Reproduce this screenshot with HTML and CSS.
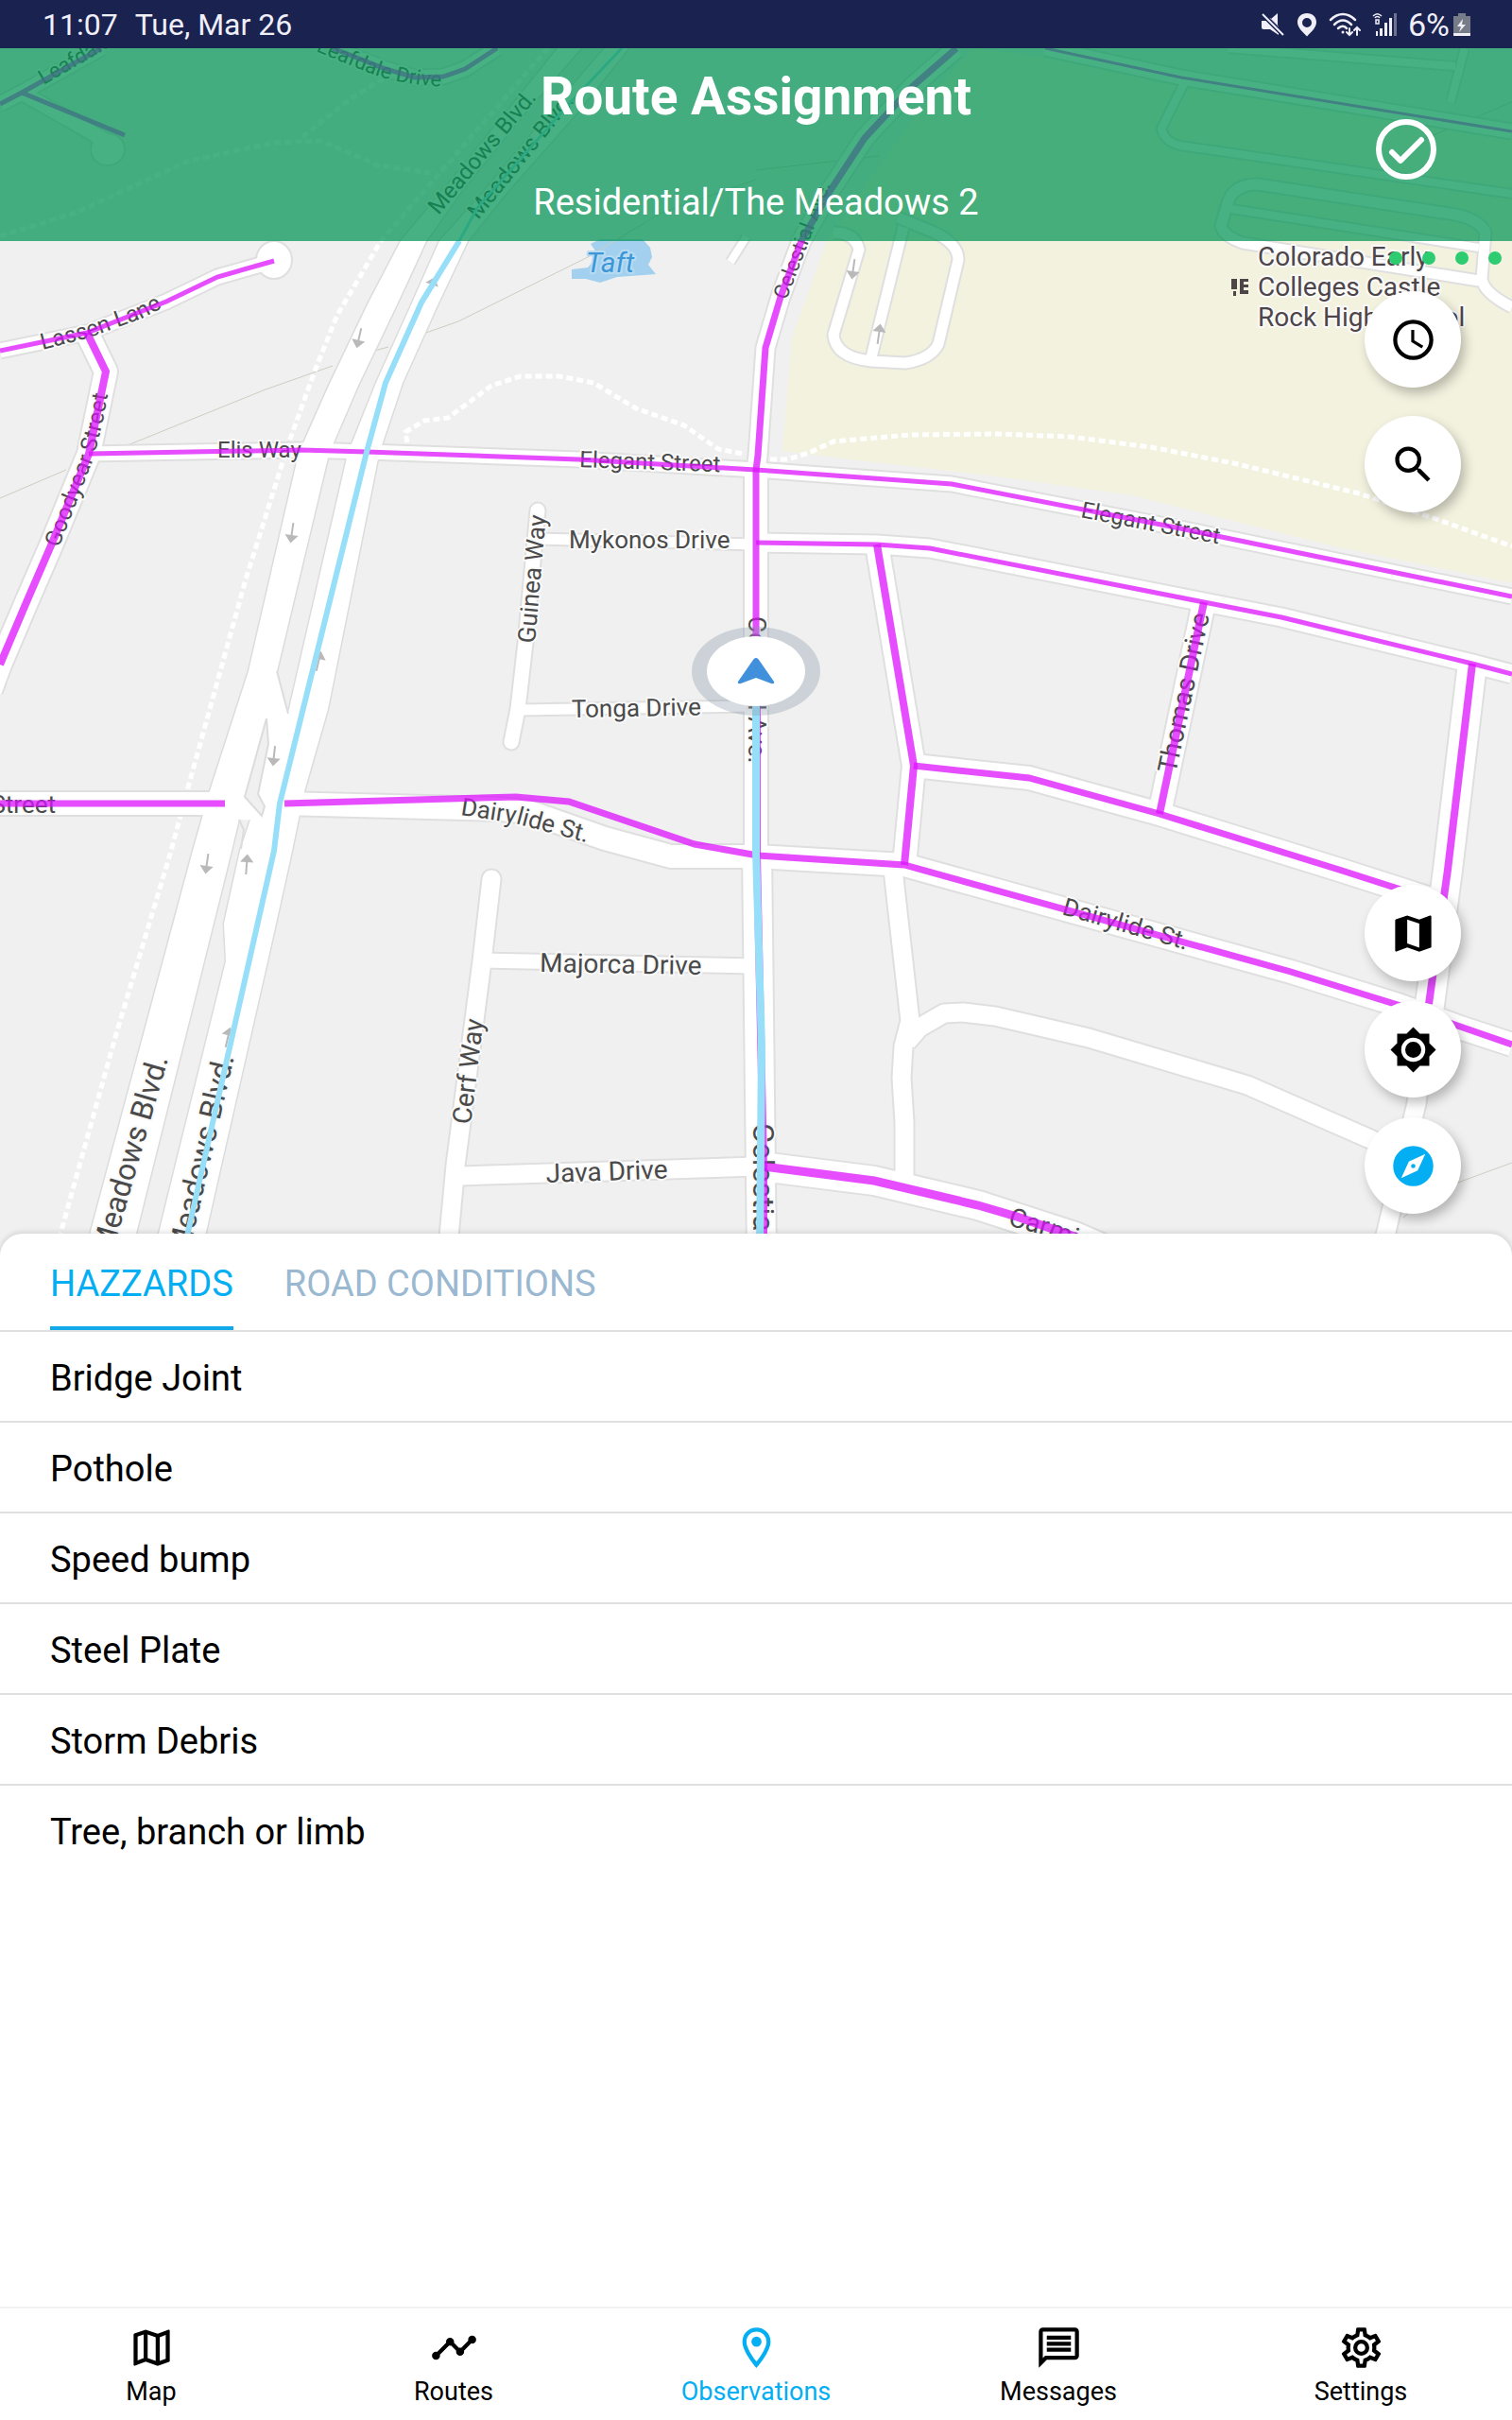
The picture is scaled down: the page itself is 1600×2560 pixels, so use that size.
FILE: index.html
```html
<!DOCTYPE html>
<html lang="en">
<head>
  <meta charset="UTF-8" />
  <meta name="viewport" content="width=device-width, initial-scale=1.0" />
  <title>Route Assignment</title>
  <link rel="stylesheet" href="styles.css">
</head>
<body>
  <div class="status-bar">
    <div class="status-left">
      <span>11:07</span>
      <span>Tue, Mar 26</span>
    </div>
    <div class="status-right">
      <svg width="26" height="26" viewBox="0 0 26 26" fill="#f0eff8">
        <path d="M1 9h5l4-3 9 9v9l-9-6H3a2 2 0 0 1-2-2z" />
        <path d="M11 7l7-6v13z" />
        <path d="M2 2l22 22" stroke="#1a2250" stroke-width="5" />
        <path d="M2 2l22 22" stroke="#f0eff8" stroke-width="2" />
      </svg>
      <svg width="22" height="26" viewBox="0 0 22 26" fill="#f0eff8">
        <path fill-rule="evenodd" d="M11 1C5 1 1 5 1 10.500c0 5 4 9 10 15 6-6 10-10 10-15C21 5 17 1 11 1zm0 5a5 5 0 1 1 0 10 5 5 0 0 1 0-10z" />
      </svg>
      <svg width="34" height="26" viewBox="0 0 34 26" fill="none" stroke="#f0eff8" stroke-width="2.500" stroke-linecap="round">
        <path d="M2 8c8-8 18-8 26 0M6 13c6-6 12-6 18 0M10 17c3-3 7-3 9 0" />
        <path d="M22 17v7m-3-3l3 3 3-3M30 24v-8m-3 3l3-3 3 3" stroke-width="2" />
        <circle cx="15" cy="21" r="1.500" fill="#f0eff8" stroke="none" />
      </svg>
      <svg width="26" height="26" viewBox="0 0 26 26" fill="#f0eff8">
        <path d="M4 20h2v5H4zM8 17h3v8H8zM13 11h3v14h-3zM18 6h3v19h-3z" />
        <path d="M23 1h3v24h-3z" fill="#6d738f" />
        <path d="M1 4c3-3 6-3 9 0M3 6c1-2 4-2 5 0M4 8h3v4H4z" fill="none" stroke="#f0eff8" stroke-width="1.500" />
      </svg>
      <span class="battery">6%
        <svg width="18" height="26" viewBox="0 0 18 26">
          <path d="M5 1h8v3h5v21H0V4h5z" fill="#767c88" />
          <path d="M0 22h18v2a1 1 0 0 1-1 1H1a1 1 0 0 1-1-1z" fill="#f0eff8" />
          <path d="M10 7l-6 8h4l-2 6 7-8H9z" fill="#f0eff8" />
        </svg>
      </span>
    </div>
  </div>

  <section class="map">
    <svg class="map-canvas" viewBox="0 51 1600 1274">
      <defs>
        <path id="arrow" d="M0-10V8M-5 4l5 6 5-6z" fill="#b9b9b9" stroke="#b9b9b9" stroke-width="2" />
        <path id="lassen" d="M45 370L95 357L150 337L190 316" />
        <path id="goodyear" d="M62 580L84 524L100 482L109 445L118 395" />
        <path id="dairylide" d="M487 862L545 871L650 899" />
        <path id="carmi" d="M1066 1296L1110 1308L1200 1345" />
        <path id="leafdale" d="M334 54L385 75Q420 90 475 92" />
        <!-- every plain road, stroked twice: casing, then fill -->
        <g id="roads" fill="none" stroke-linejoin="round">
          <g class="w8"><path d="M773 277L790 250M1254 86L1229 136Q1232 150 1249 154L1600 205M1303 221L1565 262M1535 108L1550 51M1300 51L1540 70" /></g>
          <g class="w12"><path d="M882 246Q905 246 909 264L882 354Q884 378 922 382L958 384Q985 380 993 364L1014 275Q1014 258 989 246L950 230M956 240L922 378" />
            <path d="M1600 325Q1570 310 1568 295L1572 246Q1565 232 1540 227L1331 195Q1305 195 1299 215L1292 239Q1295 250 1315 257L1565 297" /></g>
          <g class="w12"><path d="M569 570L800 576M550 751L800 747" /></g>
          <g class="w16"><path stroke-linecap="round" d="M569 540L556 680L548 750L541 785" /></g>
          <g class="w16"><path d="M510 1016L800 1022M0 371L92 352L153 328L176 319L230 293L290 276M94 480L319 476L388 478L612 486L800 497L1007 512L1239 557L1600 631M107 51L23 98L0 110M23 98L114 150M526 51L492 73L469 81L439 82L408 73L352 51M1106 51L1250 82L1600 139" /></g>
          <g class="w20"><path stroke-linecap="round" d="M520 930L510 1017L482 1233L472 1340" /><path d="M487 1244L800 1234" />
            <path d="M800 574L928 576L984 580L1274 637L1356 653L1558 702L1600 713M945 920L963 1080L956 1107L954 1140L957 1187L957 1245M960 1102L973 1087L999 1072L1019 1071L1053 1075L1152 1098L1320 1148L1450 1205L1485 1222M1512 1062L1499 1167L1467 1303L1460 1330" />
            <path d="M1012 51L966 91L915 146L877 204L848 255L826 314L810 368L802 482L800 497" /></g>
          <g class="w24"><path d="M0 850L300 850L530 856L560 859L640 887L710 906L800 906L957 915L1366 1028L1479 1063L1545 1087L1600 1105M92 352L112 393L94 480L54 577L28 637L0 703L-10 730M800 490L800 910M928 576L967 810L957 915M967 810L1089 823L1227 861L1417 920L1520 953M1274 637L1227 861" /></g>
          <g class="w30"><path d="M1558 702L1532 920L1512 1070M801 900L806 1330M806 1234L925 1249L1035 1275L1137 1308L1200 1335" /></g>
          <g class="w8"><ellipse cx="290" cy="275" rx="14" ry="15" fill="#fff" /><ellipse cx="114" cy="158" rx="13" ry="12" fill="#fff" /></g>
        </g>
      </defs>

      <rect x="0" y="51" width="1600" height="1274" fill="#f0f0f0" />
      <path fill="#f3f2df" d="M1030 51L1106 60L1250 90L1600 147V617L1412 578L1198 524L1055 504L866 482L828 477L838 357L875 255L920 190L985 100z" />
      <path fill="#a3d0ee" d="M625 258L635 253H680L688 262L690 272L686 280L694 290L653 293L635 299L620 295H605V285L622 283L633 270z" />
      <path class="trail" d="M0 527L70 497M135 471L281 412L352 387M389 373L411 367M448 353L485 340L622 272L700 225L800 190M1540 1252L1600 1230M1485 1288L1500 1275M800 180L930 165M1500 150L1600 108" />
      <g class="footpath">
        <path d="M580 51L403 255L357 333L334 390L306 467L260 613L199 833L181 900L122 1097L64 1305" />
        <path d="M431 468L429 457L449 445L474 442L520 408L551 398H592L628 405L673 432L724 450L760 475L786 480" />
        <path d="M815 486H833L856 479L882 467L963 460L1055 459L1132 462L1218 473L1310 491L1438 522L1514 547L1600 578" />
        <path d="M0 250L80 225L200 170L290 151L340 149L400 175L455 183M320 145L370 105L420 75" />
      </g>

      <!-- Meadows Blvd. widens towards the viewer -->
      <g fill="#fff" stroke="#dcdcdc" stroke-width="3">
        <path d="M595 45L535 120L470 200L424 255L390 320L347 410L316 480L263 710L222 837L204 900L90 1325H139L245 900L260 837L293 710L348 480L378 410L421 320L451 255L490 200L555 120L620 45z" />
        <path d="M645 45L585 115L510 205L465 255L434 325L398 405L368 480L306 750L275 837L254 900L237 977L239 1017L163 1325H213L283 1017L292 977L309 900L322 837L347 750L401 480L426 405L462 325L495 255L535 205L610 120L670 45z" />
      </g>
      <use href="#roads" class="casing" />
      <use href="#roads" class="fill" />
      <path fill="#fff" d="M595 45L535 120L470 200L424 255L390 320L347 410L316 480L263 710L222 837L204 900L90 1325H139L245 900L260 837L293 710L348 480L378 410L421 320L451 255L490 200L555 120L620 45z" />
      <path fill="#fff" d="M645 45L585 115L510 205L465 255L434 325L398 405L368 480L306 750L275 837L254 900L237 977L239 1017L163 1325H213L283 1017L292 977L309 900L322 837L347 750L401 480L426 405L462 325L495 255L535 205L610 120L670 45z" />
      <path fill="#fff" d="M292 706L305 757L278 868L253 867L240 850z" />
      <path fill="none" stroke="#dcdcdc" stroke-width="2" d="M293 710L305 755M253 867L258 878L255 898" />
      <path fill="#f0f0f0" stroke="#dcdcdc" stroke-width="2" d="M282 760L284 787L273 840L280 853L277 863L259 843z" />

      <g>
        <use href="#arrow" transform="translate(380 357) rotate(13)" />
        <use href="#arrow" transform="translate(309 563) rotate(8)" />
        <use href="#arrow" transform="translate(290 799) rotate(6)" />
        <use href="#arrow" transform="translate(219 913) rotate(8)" />
        <use href="#arrow" transform="translate(261 915) rotate(184)" />
        <use href="#arrow" transform="translate(903 284) rotate(8)" />
        <use href="#arrow" transform="translate(930 354) rotate(188)" />
        <use href="#arrow" transform="translate(456 304) rotate(200)" />
        <use href="#arrow" transform="translate(337 700) rotate(193)" />
        <use href="#arrow" transform="translate(241 1098) rotate(193)" />
      </g>

      <g class="labels">
        <text><textPath href="#lassen">Lassen Lane</textPath></text>
        <text><textPath href="#goodyear">Goodyear Street</textPath></text>
        <text class="mid"><textPath href="#dairylide">Dairylide St.</textPath></text>
        <text class="near"><textPath href="#carmi">Carmi</textPath></text>
        <text class="far"><textPath href="#leafdale">Leafdale Drive</textPath></text>
        <text class="far" transform="translate(46 90) rotate(-30)">Leafdale</text>
        <text x="230" y="484">Elis Way</text>
        <text transform="translate(613 494) rotate(2)">Elegant Street</text>
        <text transform="translate(1143 547) rotate(11)">Elegant Street</text>
        <text class="mid" transform="translate(602 580)">Mykonos Drive</text>
        <text class="mid" transform="translate(605 759) rotate(-1)">Tonga Drive</text>
        <text class="mid" transform="translate(566 681) rotate(-85)">Guinea Way</text>
        <text class="near" transform="translate(1244 819) rotate(-78)">Thomas Drive</text>
        <text class="mid" text-anchor="end" x="59" y="860">Street</text>
        <text class="mid" transform="translate(1123 967) rotate(16)">Dairylide St.</text>
        <text class="near" transform="translate(571 1028) rotate(1)">Majorca Drive</text>
        <text class="near" transform="translate(578 1251) rotate(-2)">Java Drive</text>
        <text class="near" transform="translate(498 1190) rotate(-83)">Cerf Way</text>
        <text class="wide" text-anchor="end" transform="translate(178 1120) rotate(-74)">Meadows Blvd.</text>
        <text class="wide" text-anchor="end" transform="translate(248 1118) rotate(-77)">Meadows Blvd.</text>
        <text transform="translate(464 228) rotate(-50)">Meadows Blvd.</text>
        <text transform="translate(506 233) rotate(-51)">Meadows Blvd.</text>
        <text class="far" transform="translate(832 318) rotate(-69)">Celestial Ave.</text>
        <text class="mid" transform="translate(792 652) rotate(90)">Celestial Ave.</text>
        <text class="wide" transform="translate(797 1188) rotate(90)">Celestial Ave.</text>
        <text class="lake" x="620" y="288">Taft</text>
        <g class="school">
          <text x="1331" y="281">Colorado Early</text>
          <text x="1331" y="313">Colleges Castle</text>
          <text x="1331" y="345">Rock High School</text>
        </g>
        <path fill="#4d4548" d="M1303 295h6v11h-6zM1305 308h3v5h-3zM1312 295h9v3h-5v3h5v3h-5v3h5v4h-9z" />
      </g>

      <g class="route">
        <path stroke-width="5" d="M0 371L92 352L153 328L176 319L230 293L290 276M94 480L319 476L388 478L612 486L800 497L1007 512L1239 557L1600 631M800 574L928 576L984 580L1274 637L1356 653L1558 702L1600 713M352 51L408 73L439 82L469 81L492 73L526 51M107 51L23 98L0 110M23 98L132 143" />
        <path stroke-width="3" d="M1106 51L1250 82L1600 139" />
        <path stroke-width="7" d="M1012 51L966 91L915 146L877 204L848 255L826 314L810 368L802 482L800 497V710" />
        <path stroke-width="7" d="M0 850H238M301 850L546 843L602 848L735 893L802 905L957 915L1366 1028L1479 1063L1600 1105M967 810L1089 823L1227 861L1417 920L1520 953" />
        <path stroke-width="8" d="M92 352L112 393L94 480L54 577L28 637L0 703M928 576L967 810L957 915M1274 637L1227 861M1558 702L1532 920L1512 1062M801 710L801 905L808 1234V1325" />
        <path stroke-width="9" d="M808 1234L925 1249L1035 1275L1076 1287L1137 1308L1200 1335" />
      </g>
      <g fill="none" stroke="#97dff9">
        <path stroke-width="3" d="M658 51L602 110L505 220L486 255" />
        <path stroke-width="6" d="M486 255L446 320L408 405L388 478L296 850L290 900L194 1325" />
        <path stroke-width="8" d="M800 710V900L806 1108L804 1325" />
      </g>

      <ellipse cx="800" cy="710" rx="68" ry="47" fill="#8a9aa8" fill-opacity=".35" />
      <ellipse cx="800" cy="710" rx="52" ry="37" fill="#fff" />
      <path fill="#4190dc" d="M800 696q2 0 3 2l16 23q1 3-3 2l-16-6-16 6q-4 1-3-2l16-23q1-2 3-2z" />
    </svg>

    <header class="header">
      <h1>Route Assignment</h1>
      <p>Residential/The Meadows 2</p>
      <button class="done" aria-label="Complete route">
        <svg viewBox="0 0 64 64" fill="none" stroke="#fff" stroke-width="6" stroke-linecap="round" stroke-linejoin="round">
          <circle cx="32" cy="32" r="29" /><path d="M17 35l9 9 22-22" />
        </svg>
      </button>
    </header>

    <div class="dots"><i></i><i></i><i></i><i></i></div>

    <div class="fabs fabs-top">
      <button class="fab" aria-label="History">
        <svg viewBox="0 0 24 24"><path d="M12 2a10 10 0 1 0 0 20 10 10 0 0 0 0-20zm0 18a8 8 0 1 1 0-16 8 8 0 0 1 0 16zm.5-13H11v6l5.200 3.200.8-1.300-4.500-2.700z" /></svg>
      </button>
      <button class="fab" aria-label="Search">
        <svg viewBox="0 0 24 24"><path d="M15.500 14h-.79l-.28-.27A6.470 6.470 0 0 0 16 9.500 6.500 6.500 0 1 0 9.500 16c1.610 0 3.090-.59 4.230-1.570l.27.28v.79l5 4.990L20.490 19zm-6 0a4.500 4.500 0 1 1 0-9 4.500 4.500 0 0 1 0 9z" /></svg>
      </button>
    </div>

    <div class="fabs fabs-bottom">
      <button class="fab" aria-label="Map layers">
        <svg viewBox="0 0 24 24"><path d="M20.500 3l-.16.03L15 5.100 9 3 3.360 4.900c-.21.07-.36.25-.36.48V20.500c0 .28.22.5.5.5l.16-.03L9 18.900l6 2.100 5.640-1.900c.21-.07.36-.25.36-.48V3.500c0-.28-.22-.5-.5-.5zM15 19l-6-2.110V5l6 2.110z" /></svg>
      </button>
      <button class="fab" aria-label="Brightness">
        <svg viewBox="0 0 24 24"><path d="M20 8.690V4h-4.690L12 .69 8.690 4H4v4.690L.69 12 4 15.310V20h4.690L12 23.310 15.310 20H20v-4.690L23.310 12zM12 18a6 6 0 1 1 0-12 6 6 0 0 1 0 12zm0-10a4 4 0 1 0 0 8 4 4 0 0 0 0-8z" /></svg>
      </button>
      <button class="fab fab-active" aria-label="Compass">
        <svg viewBox="0 0 24 24"><path d="M12 10.900a1.100 1.100 0 1 0 0 2.200 1.100 1.100 0 0 0 0-2.200zM12 2a10 10 0 1 0 0 20 10 10 0 0 0 0-20zm2.190 12.190L6 18l3.810-8.190L18 6z" /></svg>
      </button>
    </div>
  </section>

  <main class="sheet">
    <div class="tabs">
      <button class="tab active">HAZZARDS</button>
      <button class="tab">ROAD CONDITIONS</button>
    </div>
    <ul class="hazards">
      <li><button>Bridge Joint</button></li>
      <li><button>Pothole</button></li>
      <li><button>Speed bump</button></li>
      <li><button>Steel Plate</button></li>
      <li><button>Storm Debris</button></li>
      <li><button>Tree, branch or limb</button></li>
    </ul>
  </main>

  <nav class="bottom-nav">
    <a href="#map">
      <svg viewBox="0 0 24 24"><path d="M20.500 3l-.16.03L15 5.100 9 3 3.360 4.900c-.21.07-.36.25-.36.48V20.500c0 .28.22.5.5.5l.16-.03L9 18.900l6 2.100 5.640-1.900c.21-.07.36-.25.36-.48V3.500c0-.28-.22-.5-.5-.5zM10 5.470l4 1.400v11.660l-4-1.400zm-5 .99l3-1.010v11.700l-3 1.160zm14 11.080l-3 1.010V6.860l3-1.160z" /></svg>
      Map
    </a>
    <a href="#routes">
      <svg viewBox="0 0 24 24"><path d="M23 8c0 1.100-.9 2-2 2-.18 0-.35-.02-.51-.07l-3.560 3.550c.05.16.07.34.07.52 0 1.100-.9 2-2 2s-2-.9-2-2c0-.18.02-.36.07-.52l-2.550-2.550c-.16.05-.34.07-.52.07s-.36-.02-.52-.07l-4.550 4.560c.05.16.07.33.07.51 0 1.100-.9 2-2 2s-2-.9-2-2 .9-2 2-2c.18 0 .35.02.51.07l4.560-4.550C8.020 9.360 8 9.180 8 9c0-1.100.9-2 2-2s2 .9 2 2c0 .18-.02.36-.07.52l2.550 2.550c.16-.05.34-.07.52-.07s.36.02.52.07l3.550-3.560C19.020 8.350 19 8.180 19 8c0-1.100.9-2 2-2s2 .9 2 2z" /></svg>
      Routes
    </a>
    <a href="#observations" class="current">
      <svg viewBox="0 0 24 24"><path d="M12 2a7 7 0 0 0-7 7c0 5.250 7 13 7 13s7-7.750 7-13a7 7 0 0 0-7-7zM7 9a5 5 0 0 1 10 0c0 2.880-2.880 7.190-5 9.880C9.920 16.210 7 11.850 7 9z" /><circle cx="12" cy="9" r="2.500" /></svg>
      Observations
    </a>
    <a href="#messages">
      <svg viewBox="0 0 24 24"><path d="M4 4h16v12H5.170L4 17.170zm0-2c-1.100 0-1.990.9-1.990 2L2 22l4-4h14c1.100 0 2-.9 2-2V4c0-1.100-.9-2-2-2zm2 10h12v2H6zm0-3h12v2H6zm0-3h12v2H6z" /></svg>
      Messages
    </a>
    <a href="#settings">
      <svg viewBox="0 0 24 24"><path d="M19.430 12.980c.04-.32.07-.64.07-.98s-.03-.66-.07-.98l2.110-1.650c.19-.15.24-.42.12-.64l-2-3.460a.5.5 0 0 0-.61-.22l-2.490 1c-.52-.4-1.080-.73-1.690-.98l-.38-2.650A.488.488 0 0 0 14 2h-4c-.25 0-.46.18-.49.42l-.38 2.650c-.61.25-1.170.59-1.690.98l-2.490-1a.5.5 0 0 0-.61.22l-2 3.460c-.13.22-.07.49.12.64l2.110 1.650c-.04.32-.07.65-.07.98s.03.66.07.98l-2.110 1.650c-.19.15-.24.42-.12.64l2 3.460c.12.22.38.3.61.22l2.490-1c.52.4 1.080.73 1.690.98l.38 2.650c.03.24.24.42.49.42h4c.25 0 .46-.18.49-.42l.38-2.650c.61-.25 1.170-.59 1.690-.98l2.490 1c.23.09.49 0 .61-.22l2-3.460a.5.5 0 0 0-.12-.64zm-1.980-1.710c.04.31.05.52.05.73s-.02.43-.05.73l-.14 1.130.89.7 1.080.84-.7 1.210-1.270-.51-1.040-.42-.9.68c-.43.32-.84.56-1.250.73l-1.060.43-.16 1.130-.2 1.350h-1.400l-.19-1.350-.16-1.130-1.060-.43c-.43-.18-.83-.41-1.230-.71l-.91-.7-1.060.43-1.270.51-.7-1.210 1.080-.84.89-.7-.14-1.130c-.03-.31-.05-.54-.05-.74s.02-.43.05-.73l.14-1.130-.89-.7-1.080-.84.7-1.210 1.270.51 1.040.42.9-.68c.43-.32.84-.56 1.250-.73l1.060-.43.16-1.130.2-1.350h1.390l.19 1.350.16 1.130 1.060.43c.43.18.83.41 1.230.71l.91.7 1.060-.43 1.270-.51.7 1.210-1.070.85-.89.7zM12 8a4 4 0 1 0 0 8 4 4 0 0 0 0-8zm0 6a2 2 0 1 1 0-4 2 2 0 0 1 0 4z" /></svg>
      Settings
    </a>
  </nav>
</body>
</html>
```
FILE: styles.css
```css
* {
  box-sizing: border-box;
}

body {
  font-family: Roboto, sans-serif;
  background-color: #fff;
  color: #000;
  margin: 0;
  min-height: 100vh;
  display: flex;
  flex-direction: column;
}

button {
  font: inherit;
  color: inherit;
  background: none;
  border: none;
  padding: 0;
  cursor: pointer;
}

svg {
  display: block;
}

/* STATUS BAR */
.status-bar {
  display: flex;
  justify-content: space-between;
  align-items: center;
  height: 51px;
  padding: 0 44px 0 45px;
  background: #1a2250;
  color: #f0eff8;
  font-size: 32px;
}

.status-left {
  display: flex;
  gap: 18px;
}

.status-right {
  display: flex;
  align-items: center;
  gap: 12px;
}

.battery {
  display: flex;
  align-items: center;
  gap: 4px;
  font-size: 34px;
}

/* MAP */
.map {
  position: relative;
  overflow: hidden;
}

.map-canvas {
  width: 100%;
  height: auto;
}

.fill {
  --edge: 0px;
  stroke: #fff;
}

.casing {
  --edge: 4px;
  stroke: #dfdfdf;
}

.w8 { stroke-width: calc(8px + var(--edge)); }
.w12 { stroke-width: calc(11px + var(--edge)); }
.w16 { stroke-width: calc(15px + var(--edge)); }
.w20 { stroke-width: calc(19px + var(--edge)); }
.w24 { stroke-width: calc(24px + var(--edge)); }
.w30 { stroke-width: calc(30px + var(--edge)); }

.trail {
  fill: none;
  stroke: #c9cfc0;
}

.footpath {
  fill: none;
  stroke: #fff;
  stroke-width: 5px;
  stroke-dasharray: 7 4;
}

.route {
  fill: none;
  stroke: #dc11ff;
  stroke-opacity: 0.75;
}

.labels text {
  font-size: 24px;
  fill: #4a4a4a;
  stroke: #fafafa;
  stroke-width: 4px;
  stroke-linejoin: round;
  paint-order: stroke;
}

.labels .far {
  font-size: 22px;
}

.labels .mid {
  font-size: 26px;
}

.labels .near {
  font-size: 28px;
}

.labels .wide {
  font-size: 32px;
}

.labels .lake {
  font-size: 30px;
  font-style: italic;
  fill: #3b97d8;
  stroke: #b9dcf3;
}

.labels .school text {
  font-size: 28px;
  fill: #4d4548;
}

/* HEADER */
.header {
  position: absolute;
  top: 0;
  left: 0;
  right: 0;
  height: 204px;
  padding-top: 18px;
  background: rgba(4, 148, 85, 0.73);
  color: #fff;
  text-align: center;
}

.header h1 {
  margin: 0;
  font-size: 55px;
  line-height: 66px;
}

.header p {
  margin: 56px 0 0;
  font-size: 38px;
  line-height: 46px;
}

.done {
  position: absolute;
  top: 75px;
  right: 80px;
  width: 64px;
  height: 64px;
}

.dots {
  position: absolute;
  top: 215px;
  right: 11px;
  display: flex;
  gap: 21px;
}

.dots i {
  width: 14px;
  height: 14px;
  border-radius: 50%;
  background: #2ecc71;
}

.fabs {
  position: absolute;
  right: 54px;
  display: flex;
  flex-direction: column;
}

.fabs-top {
  top: 257px;
  gap: 30px;
}

.fabs-bottom {
  bottom: 41px;
  gap: 21px;
}

.fab {
  display: flex;
  align-items: center;
  justify-content: center;
  width: 102px;
  height: 102px;
  border-radius: 50%;
  background: #fff;
  box-shadow: 4px 6px 12px rgba(0, 0, 0, 0.25);
}

.fab svg {
  width: 51px;
  height: 51px;
}

.fab-active {
  fill: #03aef2;
}

/* SHEET */
.sheet {
  position: relative;
  flex: 1;
  margin-top: -20px;
  background: #fff;
  border-radius: 24px 24px 0 0;
  box-shadow: 0 -1px 6px rgba(0, 0, 0, 0.15);
}

.tabs {
  display: flex;
  gap: 54px;
  height: 104px;
  padding: 0 53px;
  border-bottom: 2px solid #e0e0e0;
}

.tab {
  padding-top: 8px;
  font-size: 38px;
  color: #9bb8d1;
  border-bottom: 4px solid transparent;
}

.tab.active {
  color: #03aef2;
  border-bottom-color: #12a9e8;
}

.hazards {
  list-style: none;
  margin: 0;
  padding: 0;
}

.hazards li + li {
  border-top: 2px solid #e0e0e0;
}

.hazards button {
  display: block;
  width: 100%;
  height: 94px;
  padding: 4px 53px 0;
  font-size: 38px;
  text-align: left;
}

/* BOTTOM NAV */
.bottom-nav {
  position: relative;
  display: grid;
  grid-template-columns: repeat(5, 1fr);
  height: 120px;
  padding-top: 16px;
  border-top: 2px solid #f3f3f3;
  background: #fff;
}

.bottom-nav a {
  display: flex;
  flex-direction: column;
  align-items: center;
  gap: 6px;
  color: #000;
  font-size: 27px;
  line-height: 30px;
  text-decoration: none;
}

.bottom-nav svg {
  width: 51px;
  height: 51px;
  fill: currentColor;
}

.bottom-nav .current {
  color: #03aef2;
}
```
